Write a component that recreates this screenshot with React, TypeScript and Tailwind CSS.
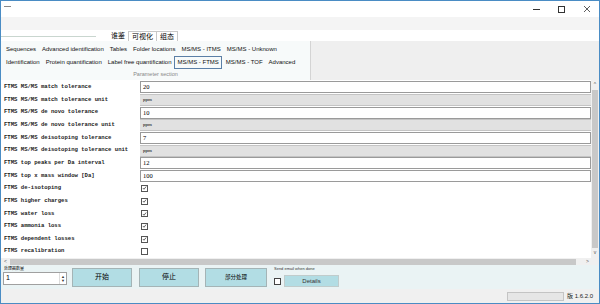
import React from "react"

const rows: { label: string; kind: "text" | "combo" | "check"; value?: string; checked?: boolean }[] = [
  { label: "FTMS MS/MS match tolerance", kind: "text", value: "20" },
  { label: "FTMS MS/MS match tolerance unit", kind: "combo", value: "ppm" },
  { label: "FTMS MS/MS de novo tolerance", kind: "text", value: "10" },
  { label: "FTMS MS/MS de novo tolerance unit", kind: "combo", value: "ppm" },
  { label: "FTMS MS/MS deisotoping tolerance", kind: "text", value: "7" },
  { label: "FTMS MS/MS deisotoping tolerance unit", kind: "combo", value: "ppm" },
  { label: "FTMS top peaks per Da interval", kind: "text", value: "12" },
  { label: "FTMS top x mass window [Da]", kind: "text", value: "100" },
  { label: "FTMS de-isotoping", kind: "check", checked: true },
  { label: "FTMS higher charges", kind: "check", checked: true },
  { label: "FTMS water loss", kind: "check", checked: true },
  { label: "FTMS ammonia loss", kind: "check", checked: true },
  { label: "FTMS dependent losses", kind: "check", checked: true },
  { label: "FTMS recalibration", kind: "check", checked: false },
]

const row1 = ["Sequences", "Advanced identification", "Tables", "Folder locations", "MS/MS - ITMS", "MS/MS - Unknown"]
const row2 = ["Identification", "Protein quantification", "Label free quantification", "MS/MS - FTMS", "MS/MS - TOF", "Advanced"]

function CheckBox({ checked }: { checked?: boolean }) {
  return (
    <div className="w-[7px] h-[7px] border border-[#555] bg-white flex items-center justify-center">
      {checked && (
        <svg width="6" height="6" viewBox="0 0 6 6">
          <path d="M1 3l1.4 1.5L5 1.2" stroke="#333" strokeWidth="0.9" fill="none" />
        </svg>
      )}
    </div>
  )
}

export default function App() {
  return (
    <div className="w-[600px] h-[304px] flex flex-col border border-[#4a8cc4] bg-white overflow-hidden font-['Liberation_Sans','Noto_Sans_CJK_SC',sans-serif] text-black">
      {/* title bar */}
      <div className="h-[16px] flex items-center justify-between bg-white">
        <div className="ml-[3px] mt-[-6px] w-[7px] h-[1px] bg-[#888]" />
        <div className="flex items-center h-full">
          <div className="w-[25px] flex justify-center"><div className="w-[7px] h-[1px] bg-[#333]" /></div>
          <div className="w-[25px] flex justify-center"><div className="w-[7px] h-[7px] border border-[#333]" /></div>
          <div className="w-[25px] flex justify-center">
            <svg width="8" height="8" viewBox="0 0 8 8"><path d="M1 1l6 6M7 1L1 7" stroke="#333" strokeWidth="0.8" /></svg>
          </div>
        </div>
      </div>
      {/* menu strip */}
      <div className="h-[13px] bg-[#f4f4f4]" />
      {/* top tabs */}
      <div className="h-[11px] flex items-end bg-white">
        <div className="w-[95px] h-[4px] mb-[4px] border-b border-[#c9d6cf]" />
        <div className="ml-[12px] flex items-end text-[7px] leading-[9px]">
          <div className="px-[3px] h-[10px]">谁鉴</div>
          <div className="px-[3px] h-[10px] border-x border-t border-[#c8c8c8] bg-white">可视化</div>
          <div className="px-[3px] h-[10px] border-r border-t border-[#c8c8c8]">组态</div>
        </div>
      </div>
      {/* ribbon */}
      <div className="h-[39px] flex bg-[#efefef]">
        <div className="w-[310px] bg-[#f7fafa] border-r border-[#d4d4d4] flex flex-col text-[6px] text-[#111] whitespace-nowrap">
          <div className="h-[15px] flex items-center gap-[6px] pl-[5px] pt-[2px]">
            {row1.map((t) => <span key={t}>{t}</span>)}
          </div>
          <div className="h-[13px] flex items-center gap-[6px] pl-[5px]">
            {row2.map((t) =>
              t === "MS/MS - FTMS" ? (
                <span key={t} className="border border-[#5b7fa6] px-[2px] py-[1px] ml-[-3px] mr-[-2px]">{t}</span>
              ) : (
                <span key={t}>{t}</span>
              )
            )}
          </div>
          <div className="flex-1 flex items-center justify-center text-[5.5px] text-[#888]">Parameter section</div>
        </div>
      </div>
      {/* parameter grid */}
      <div className="h-[178px] flex bg-white">
        <div className="flex-1 flex flex-col pt-[1px]">
          {rows.map((r) => (
            <div key={r.label} className="h-[12.7px] flex items-center">
              <div className="w-[139px] pl-[3px] font-['Liberation_Mono',monospace] text-[5.6px] font-semibold text-[#222] whitespace-nowrap overflow-hidden">
                {r.label}
              </div>
              {r.kind === "text" && (
                <div className="flex-1 h-[12px] border border-[#9a9a9a] bg-white flex items-center pl-[2px] text-[6.5px] font-['Liberation_Serif',serif]">
                  {r.value}
                </div>
              )}
              {r.kind === "combo" && (
                <div className="flex-1 h-[12px] border-y border-[#c4c4c4] bg-[#e1e1e1] flex items-center pl-[3px] text-[5px] font-['Liberation_Serif',serif]">
                  {r.value}
                </div>
              )}
              {r.kind === "check" && (
                <div className="flex-1 h-[12px] flex items-center pl-[1px]">
                  <CheckBox checked={r.checked} />
                </div>
              )}
            </div>
          ))}
        </div>
        <div className="w-[8px] flex flex-col bg-[#f0f0f0]">
          <div className="h-[10px] flex items-center justify-center text-[5px] text-[#555]">^</div>
          <div className="flex-1 mx-[1px] bg-[#c8c8c8]" />
          <div className="h-[10px] flex items-center justify-center text-[5px] text-[#555]">v</div>
        </div>
      </div>
      {/* horizontal scrollbar */}
      <div className="h-[7px] flex items-center bg-[#f0f0f0] text-[5px] text-[#555]">
        <div className="w-[9px] text-center">&lt;</div>
        <div className="w-[566px] h-[6px] bg-[#c8c8c8]" />
        <div className="flex-1 text-center">&gt;</div>
      </div>
      {/* bottom panel */}
      <div className="h-[24px] flex items-start bg-[#eaf3f4] pt-[3px]">
        <div className="ml-[2px] w-[64px] flex flex-col">
          <div className="text-[4px] leading-[4px] pl-[1px] mt-[-1px]">处理器数量</div>
          <div className="mt-[1px] h-[13px] border border-[#a0a0a0] bg-white flex items-center justify-between pl-[2px] text-[7px]">
            <span>1</span>
            <div className="w-[7px] h-full flex flex-col items-center justify-center text-[4px] leading-[4px] text-[#333] border-l border-[#ddd]">
              <span>▲</span>
              <span>▼</span>
            </div>
          </div>
        </div>
        <div className="ml-[5px] w-[60px] h-[19px] bg-[#b2dde4] border border-[#a4b4b6] flex items-center justify-center text-[7px]">开始</div>
        <div className="ml-[7px] w-[60px] h-[19px] bg-[#b2dde4] border border-[#a4b4b6] flex items-center justify-center text-[7px]">停止</div>
        <div className="ml-[6px] w-[62px] h-[19px] bg-[#b2dde4] border border-[#a4b4b6] flex items-center justify-center text-[5.5px]">部分处理</div>
        <div className="ml-[7px] flex flex-col">
          <div className="text-[4px] leading-[5px] text-[#333] mt-[-2px]">Send email when done</div>
          <div className="mt-[4px] flex items-center">
            <div className="w-[7px] h-[7px] border border-[#444] bg-white" />
            <div className="ml-[3px] w-[55px] h-[12px] bg-[#b2dde4] border border-[#c0cccc] flex items-center justify-center text-[6px] text-[#333]">Details</div>
          </div>
        </div>
      </div>
      {/* status bar */}
      <div className="flex-1 flex items-center justify-end bg-[#f0f0f0] pr-[6px]">
        <div className="w-[57px] h-[9px] border border-[#c4c4c4] bg-[#e6e6e6]" />
        <span className="ml-[3px] text-[6px] text-[#222]">版 1.6.2.0</span>
      </div>
    </div>
  )
}
